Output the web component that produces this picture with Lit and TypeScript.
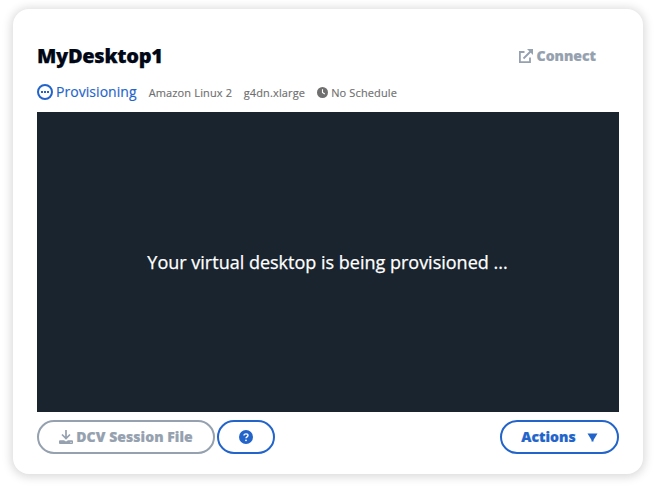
import { LitElement, html, css } from "lit";
import { customElement } from "lit/decorators.js";

@customElement("app-root")
class AppRoot extends LitElement {
  static styles = css`
    :host { display: block; height: 487px; box-sizing: border-box; padding: 9px 14px 13px 13px; background: #fff; font-family: "Open Sans", sans-serif; color: #000716; overflow: hidden; }
    * { box-sizing: border-box; }
    .card { height: 465px; border-radius: 16px; background: #fff; box-shadow: 0 1px 10px 2px rgba(0, 7, 22, 0.15); padding: 27px 24px 0; display: flex; flex-direction: column; }
    .head { display: flex; justify-content: space-between; align-items: center; height: 39px; padding-right: 23px; }
    h1 { margin: 0; font-size: 20px; font-weight: 800; line-height: 24px; letter-spacing: -0.3px; white-space: nowrap; -webkit-text-stroke: 0.25px currentColor; }
    .connect { display: flex; align-items: center; gap: 4px; font-size: 14px; font-weight: 800; color: #95a1af; -webkit-text-stroke: 0.2px currentColor; }
    .meta { display: flex; align-items: center; height: 37px; padding-bottom: 2px; font-size: 11px; letter-spacing: 0.14px; color: #6f6f6f; white-space: nowrap; -webkit-text-stroke: 0.15px currentColor; }
    .status { display: flex; align-items: center; gap: 3px; font-size: 14px; line-height: 18px; letter-spacing: 0.05px; color: #2364cb; margin-right: 12px; padding-bottom: 1px; }
    .os { margin-right: 11.500px; }
    .type { margin-right: 12px; }
    .sched { display: flex; align-items: center; gap: 3px; }
    .screen { height: 300px; background: #1a242f; color: #fff; font-size: 18px; display: flex; align-items: center; justify-content: center; white-space: nowrap; padding-right: 1px; -webkit-text-stroke: 0.25px currentColor; }
    .foot { display: flex; gap: 2px; margin-top: 8px; }
    button { height: 34px; border: 2px solid #2364cb; border-radius: 17px; background: #fff; color: #2364cb; font: 800 14px "Open Sans", sans-serif; display: flex; align-items: center; justify-content: center; padding: 0; white-space: nowrap; -webkit-text-stroke: 0.2px currentColor; }
    button span { padding-bottom: 2px; }
    .dcv { width: 178px; border-color: #95a1af; color: #95a1af; gap: 3px; letter-spacing: 0.05px; }
    .help { width: 58px; }
    .actions { width: 119px; margin-left: auto; gap: 11px; letter-spacing: 0.05px; }
    svg { display: block; flex: none; }
  `;
  render() {
    return html`<div class="card">
      <div class="head"><h1>MyDesktop1</h1>
        <div class="connect"><svg width="14" height="14" viewBox="0 0 14 14"><path d="M5.500 3H.9v10.100H11V8.500M4.500 9.500L11.500 2.500" fill="none" stroke="currentColor" stroke-width="1.800"/><path d="M8 0H14v6z" fill="currentColor"/></svg><span>Connect</span></div></div>
      <div class="meta">
        <div class="status"><svg width="16" height="16" viewBox="0 0 16 16"><circle cx="8" cy="8" r="7" fill="none" stroke="currentColor" stroke-width="2"/><path d="M4 7h2v2H4zM7 7h2v2H7zM10 7h2v2h-2z" fill="currentColor"/></svg><span>Provisioning</span></div>
        <span class="os">Amazon Linux 2</span><span class="type">g4dn.xlarge</span>
        <div class="sched"><svg width="11" height="11" viewBox="0 0 12 12"><circle cx="6" cy="6" r="6" fill="currentColor"/><path d="M6 2.500V6l2.500 1.700" fill="none" stroke="#fff" stroke-width="1.200"/></svg><span>No Schedule</span></div>
      </div>
      <div class="screen">Your virtual desktop is being provisioned ...</div>
      <div class="foot">
        <button class="dcv"><svg width="14" height="14" viewBox="0 0 14 14"><path d="M7 0v8.500M3 4.500l4 4 4-4" fill="none" stroke="currentColor" stroke-width="1.700"/><path d="M1 10.300h4L7 11.500l2-1.200h4q1 0 1 1V13q0 1-1 1H1q-1 0-1-1v-1.700q0-1 1-1z" fill="currentColor"/><circle cx="12" cy="12.300" r=".6" fill="#fff"/></svg><span>DCV Session File</span></button>
        <button class="help" aria-label="Help"><svg width="14" height="14" viewBox="0 0 14 14"><circle cx="7" cy="7" r="7" fill="currentColor"/><path d="M5 5.400C5 3.400 9 3.400 9 5.500 9 6.900 7 6.800 7 8.300" fill="none" stroke="#fff" stroke-width="1.400"/><circle cx="7" cy="10.300" r=".9" fill="#fff"/></svg></button>
        <button class="actions"><span>Actions</span><svg width="11" height="9" viewBox="0 0 11 9"><path d="M.5.500h10l-4 6.500v1.500h-2V7z" fill="currentColor"/></svg></button>
      </div>
    </div>`;
  }
}
